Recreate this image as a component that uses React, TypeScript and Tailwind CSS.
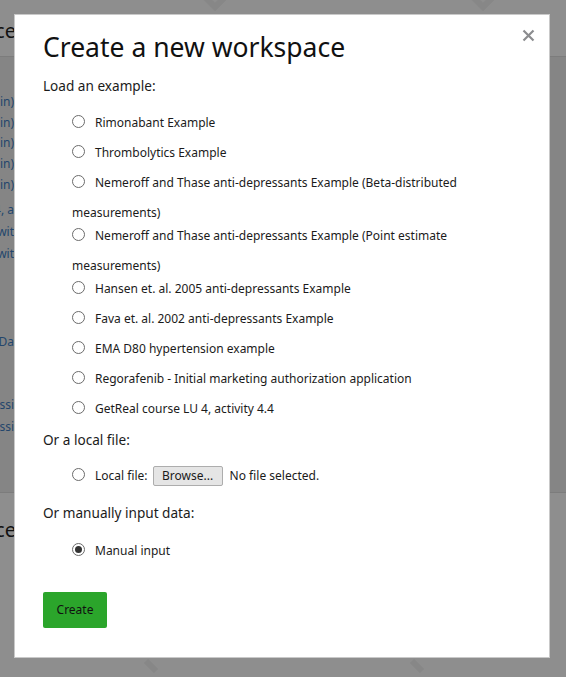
import React from "react";

const examples: string[][] = [
  ["Rimonabant Example"],
  ["Thrombolytics Example"],
  ["Nemeroff and Thase anti-depressants Example (Beta-distributed", "measurements)"],
  ["Nemeroff and Thase anti-depressants Example (Point estimate", "measurements)"],
  ["Hansen et. al. 2005 anti-depressants Example"],
  ["Fava et. al. 2002 anti-depressants Example"],
  ["EMA D80 hypertension example"],
  ["Regorafenib - Initial marketing authorization application"],
  ["GetReal course LU 4, activity 4.4"],
];

function Radio({ checked = false }: { checked?: boolean }) {
  return (
    <span className="mt-[4px] mr-[10px] flex h-[13px] w-[13px] shrink-0 items-center justify-center rounded-full border border-[#6b6b6b] bg-white">
      {checked && <span className="h-[7px] w-[7px] rounded-full bg-[#333]" />}
    </span>
  );
}

function Option({ lines, checked }: { lines: string[]; checked?: boolean }) {
  return (
    <div className="text-[12px] leading-[23px]">
      <div className="flex h-[30px] items-start">
        <Radio checked={checked} />
        <span className="whitespace-nowrap">{lines[0]}</span>
      </div>
      {lines[1] && <div className="h-[23px]">{lines[1]}</div>}
    </div>
  );
}

function Clip({ text, className = "" }: { text: string; className?: string }) {
  return (
    <div className={"flex justify-end overflow-hidden whitespace-nowrap " + className}>
      <span>{text}</span>
    </div>
  );
}

export default function App() {
  return (
    <div
      className="relative h-[677px] w-[566px] overflow-hidden bg-[#8e8e8e]"
      style={{ fontFamily: '"Noto Sans", "Open Sans", sans-serif' }}
    >
      {/* page behind the overlay */}
      <div className="h-[57px] border-b border-[#7c7c7c] pt-[16px]">
        <Clip text="Workspace" className="w-[16px] text-[20px] leading-[30px] text-[#111]" />
      </div>
      <div className="h-[436px] border-b border-[#7c7c7c] bg-[#858585] pt-[35px] text-[12px] text-[#23466c]">
        <Clip text="(admin)" className="w-[14px] leading-[20.7px]" />
        <Clip text="(admin)" className="w-[14px] leading-[20.7px]" />
        <Clip text="(admin)" className="w-[14px] leading-[20.7px]" />
        <Clip text="(admin)" className="w-[14px] leading-[20.7px]" />
        <Clip text="(admin)" className="w-[14px] leading-[20.7px]" />
        <Clip text="course LU 4, a" className="mt-[3px] w-[14px] leading-[22px]" />
        <Clip text="wit" className="w-[14px] leading-[22px]" />
        <Clip text="wit" className="w-[14px] leading-[22px]" />
        <Clip text="Da" className="mt-[66px] w-[14px] leading-[22px]" />
        <Clip text="ssi" className="mt-[41px] w-[14px] leading-[22px]" />
        <Clip text="ssi" className="w-[14px] leading-[22px]" />
      </div>
      <div className="pt-[22px]">
        <Clip text="Workspace" className="w-[16px] text-[20px] leading-[30px] text-[#111]" />
      </div>

      {/* faint background marks */}
      <svg className="absolute left-0 top-0" width="566" height="677" fill="none">
        <path d="M204 -4 L215 7 L226 -4" stroke="#878787" strokeWidth="6" />
        <path d="M472 -4 L483 7 L494 -4" stroke="#878787" strokeWidth="6" />
        <path d="M146 661 L156 671" stroke="#878787" strokeWidth="6" />
        <path d="M412 661 L422 671" stroke="#878787" strokeWidth="6" />
      </svg>

      {/* modal */}
      <div className="absolute left-[14px] top-[14px] h-[644px] w-[536px] border border-[#c9c9c9] bg-white px-[28px] pt-[14px] text-[#1b1b1b]">
        <button className="absolute right-[14px] top-[13px] flex h-[14px] w-[14px] items-center justify-center">
          <svg width="13" height="13" viewBox="0 0 13 13">
            <path d="M1.5 1.5 L11.5 11.5 M11.5 1.5 L1.5 11.5" stroke="#8b8c8f" strokeWidth="2.2" />
          </svg>
        </button>
        <h1 className="text-[26.5px] leading-[36px] text-[#111]">Create a new workspace</h1>
        <div className="mt-[11px] text-[13.6px] leading-[20px]">Load an example:</div>
        <div className="mt-[15px] pl-[29px]">
          {examples.map((lines) => (
            <Option key={lines.join(" ")} lines={lines} />
          ))}
        </div>
        <div className="mt-[3px] text-[13.6px] leading-[20px]">Or a local file:</div>
        <div className="mt-[14px] pl-[29px] text-[12px] leading-[23px]">
          <div className="flex h-[30px] items-start">
            <Radio />
            <span>Local file:</span>
            <span className="ml-[5px] mt-[2px] flex h-[20px] w-[70px] items-center justify-center rounded-[2px] border border-[#adadad] bg-[#e5e5e5] leading-[18px]">
              Browse...
            </span>
            <span className="ml-[7px]">No file selected.</span>
          </div>
        </div>
        <div className="mt-[9px] text-[13.6px] leading-[20px]">Or manually input data:</div>
        <div className="mt-[16px] pl-[29px]">
          <Option lines={["Manual input"]} checked />
        </div>
        <button className="mt-[23px] flex h-[36px] w-[64px] items-center justify-center rounded-[2px] bg-[#2ba52b] text-[12px] text-[#111]">
          Create
        </button>
      </div>
    </div>
  );
}
